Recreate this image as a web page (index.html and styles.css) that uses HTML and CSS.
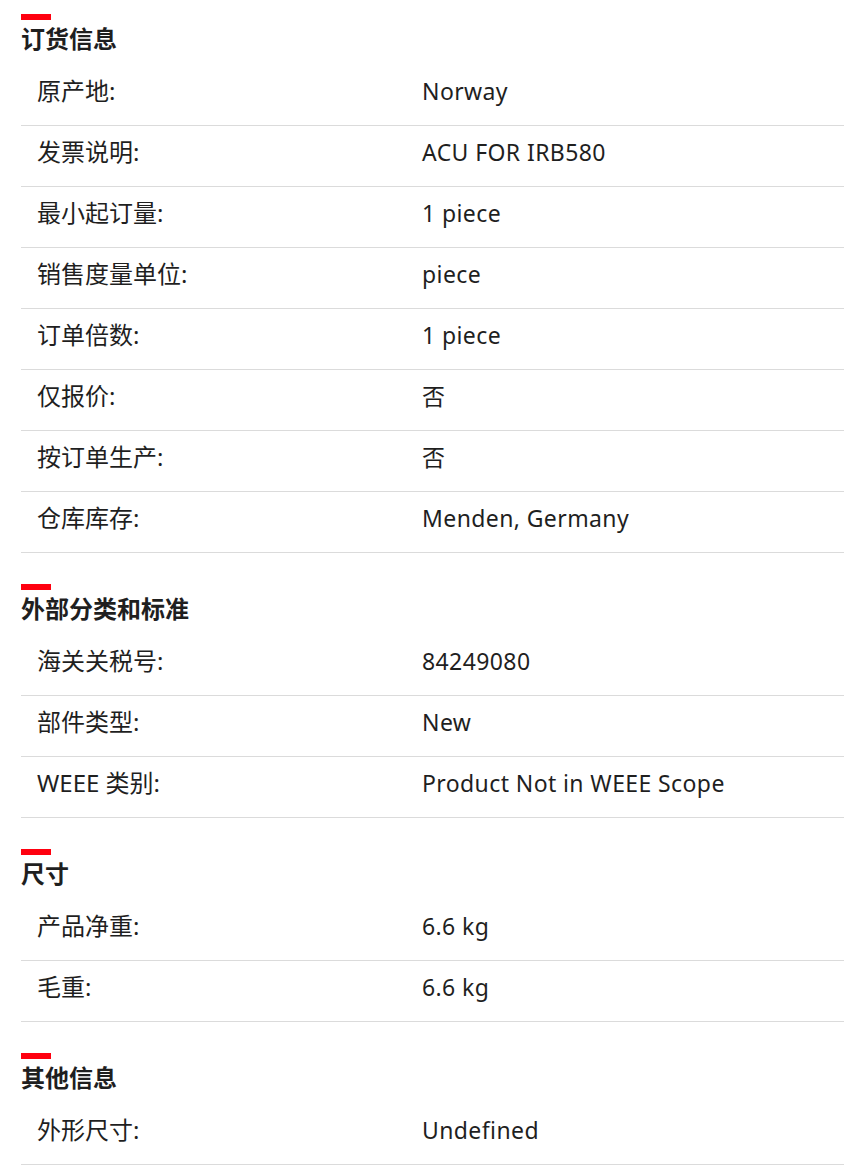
FILE: index.html
```html
<!DOCTYPE html>
<html lang="zh-CN">
<head>
<meta charset="utf-8">
<title>订货信息</title>
<link rel="stylesheet" href="styles.css">
</head>
<body>
<main class="page">
  <section class="group">
    <div class="bar"></div>
    <h2 class="title">订货信息</h2>
    <div class="row"><div class="label">原产地:</div><div class="value">Norway</div></div>
    <div class="row"><div class="label">发票说明:</div><div class="value">ACU FOR IRB580</div></div>
    <div class="row"><div class="label">最小起订量:</div><div class="value">1 piece</div></div>
    <div class="row"><div class="label">销售度量单位:</div><div class="value">piece</div></div>
    <div class="row"><div class="label">订单倍数:</div><div class="value">1 piece</div></div>
    <div class="row"><div class="label">仅报价:</div><div class="value">否</div></div>
    <div class="row"><div class="label">按订单生产:</div><div class="value">否</div></div>
    <div class="row"><div class="label">仓库库存:</div><div class="value">Menden, Germany</div></div>
  </section>
  <section class="group">
    <div class="bar"></div>
    <h2 class="title">外部分类和标准</h2>
    <div class="row"><div class="label">海关关税号:</div><div class="value">84249080</div></div>
    <div class="row"><div class="label">部件类型:</div><div class="value">New</div></div>
    <div class="row"><div class="label">WEEE 类别:</div><div class="value">Product Not in WEEE Scope</div></div>
  </section>
  <section class="group">
    <div class="bar"></div>
    <h2 class="title">尺寸</h2>
    <div class="row"><div class="label">产品净重:</div><div class="value">6.6 kg</div></div>
    <div class="row"><div class="label">毛重:</div><div class="value">6.6 kg</div></div>
  </section>
  <section class="group">
    <div class="bar"></div>
    <h2 class="title">其他信息</h2>
    <div class="row"><div class="label">外形尺寸:</div><div class="value">Undefined</div></div>
  </section>
</main>
</body>
</html>
```

FILE: styles.css
```css
html, body {
  margin: 0;
  padding: 0;
  background: #ffffff;
}

body {
  font-family: "Noto Sans", "Noto Sans CJK SC", sans-serif;
  color: #1f1f1f;
}

.page {
  padding: 14px 0 0 21px;
}

.group + .group {
  margin-top: 31px;
}

.bar {
  width: 30px;
  height: 6px;
  background: #ff000f;
}

.title {
  margin: 4px 0 11px 0;
  font-size: 24px;
  line-height: 30px;
  font-weight: 700;
  color: #1f1f1f;
}

.row {
  display: grid;
  grid-template-columns: 401px 1fr;
  align-items: baseline;
  padding: 14px 0 22px 0;
  border-bottom: 1px solid #dbdbdb;
  line-height: 24px;
}

.label {
  padding-left: 16px;
  font-size: 24px;
}

.value {
  font-size: 23px;
  letter-spacing: 0.4px;
}
```
